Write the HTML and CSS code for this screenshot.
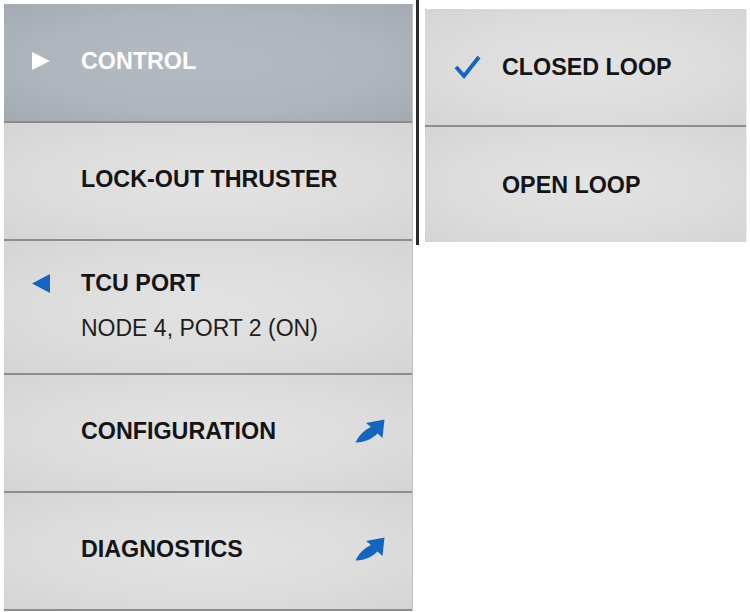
FILE: index.html
```html
<!DOCTYPE html>
<html>
<head>
<meta charset="utf-8">
<link rel="stylesheet" href="styles.css">
</head>
<body>
<div class="screen">
  <div class="menu">
    <div class="item item-active item-first">
      <span class="icon">
        <svg width="18" height="18" viewBox="0 0 18 18"><polygon points="0,0 18,9 0,18" fill="#fff"/></svg>
      </span>
      <span class="label label-white">CONTROL</span>
    </div>
    <div class="item">
      <span class="icon"></span>
      <span class="label">LOCK-OUT THRUSTER</span>
    </div>
    <div class="item item-tall">
      <span class="icon icon-top">
        <svg width="18" height="19" viewBox="0 0 18 19"><polygon points="18,0 0,9.5 18,19" fill="#1565c0"/></svg>
      </span>
      <div class="stack">
        <span class="label">TCU PORT</span>
        <span class="sub">NODE 4, PORT 2 (ON)</span>
      </div>
    </div>
    <div class="item">
      <span class="icon"></span>
      <span class="label grow">CONFIGURATION</span>
      <svg class="launch" width="30" height="25" viewBox="0 0 30 25"><path d="M29.5 0.5 L27.5 19 L22.5 14.5 C18 19 11 23.5 0.5 23.5 C4 16.5 9 11 16 8 L11 4 Z" fill="#1565c0"/></svg>
    </div>
    <div class="item">
      <span class="icon"></span>
      <span class="label grow">DIAGNOSTICS</span>
      <svg class="launch" width="30" height="25" viewBox="0 0 30 25"><path d="M29.5 0.5 L27.5 19 L22.5 14.5 C18 19 11 23.5 0.5 23.5 C4 16.5 9 11 16 8 L11 4 Z" fill="#1565c0"/></svg>
    </div>
  </div>
  <div class="rule"></div>
  <div class="submenu">
    <div class="item sub-item">
      <span class="icon">
        <svg width="28" height="25" viewBox="0 0 28 25"><polyline points="3,12 11,21 26,2" fill="none" stroke="#1565c0" stroke-width="4" stroke-linejoin="miter"/></svg>
      </span>
      <span class="label">CLOSED LOOP</span>
    </div>
    <div class="item sub-item sub-last">
      <span class="icon"></span>
      <span class="label">OPEN LOOP</span>
    </div>
  </div>
</div>
</body>
</html>
```

FILE: styles.css
```css
html, body {
  margin: 0;
  padding: 0;
  background: #ffffff;
}

.screen {
  display: flex;
  align-items: flex-start;
  padding-left: 4px;
  font-family: "Liberation Sans", Arial, sans-serif;
}

.menu {
  margin-top: 4px;
  width: 408px;
  border-right: 1px solid #c4c4c4;
  display: flex;
  flex-direction: column;
}

.item {
  height: 112px;
  display: flex;
  align-items: center;
  padding-left: 28px;
  padding-right: 27px;
  padding-bottom: 4px;
  background: radial-gradient(ellipse at center, #e3e3e3 0%, #dcdcdc 60%, #d4d4d4 100%);
  border-bottom: 2px solid #8d8d8d;
  box-sizing: content-box;
}

.item-first {
  height: 113px;
}

.item-active {
  background: radial-gradient(ellipse at center, #b3bac2 0%, #aeb5bd 60%, #a3aab2 100%);
  border-bottom-color: #8e8a88;
}

.item-tall {
  height: 132px;
  padding-bottom: 0;
  align-items: flex-start;
}

.icon {
  width: 49px;
  flex: none;
  display: flex;
  align-items: center;
}

.icon-top {
  margin-top: 33px;
}

.label {
  font-size: 23.3px;
  font-weight: bold;
  color: #141414;
  line-height: 28px;
  white-space: nowrap;
}

.label-white {
  color: #ffffff;
}

.grow {
  flex: 1;
}

.stack {
  display: flex;
  flex-direction: column;
  gap: 17px;
  padding-top: 28px;
}

.sub {
  font-size: 23px;
  color: #1e1e1e;
  line-height: 28px;
  white-space: nowrap;
}

.launch {
  flex: none;
}

.rule {
  width: 3px;
  height: 245px;
  margin-left: 3px;
  background: #2a2a2a;
  flex: none;
}

.submenu {
  margin-left: 6px;
  margin-top: 9px;
  width: 321px;
  display: flex;
  flex-direction: column;
  border-right: 1px solid #efefef;
}

.sub-item {
  height: 116px;
  padding-bottom: 0;
}

.sub-last {
  height: 115px;
  border-bottom: none;
}
```
